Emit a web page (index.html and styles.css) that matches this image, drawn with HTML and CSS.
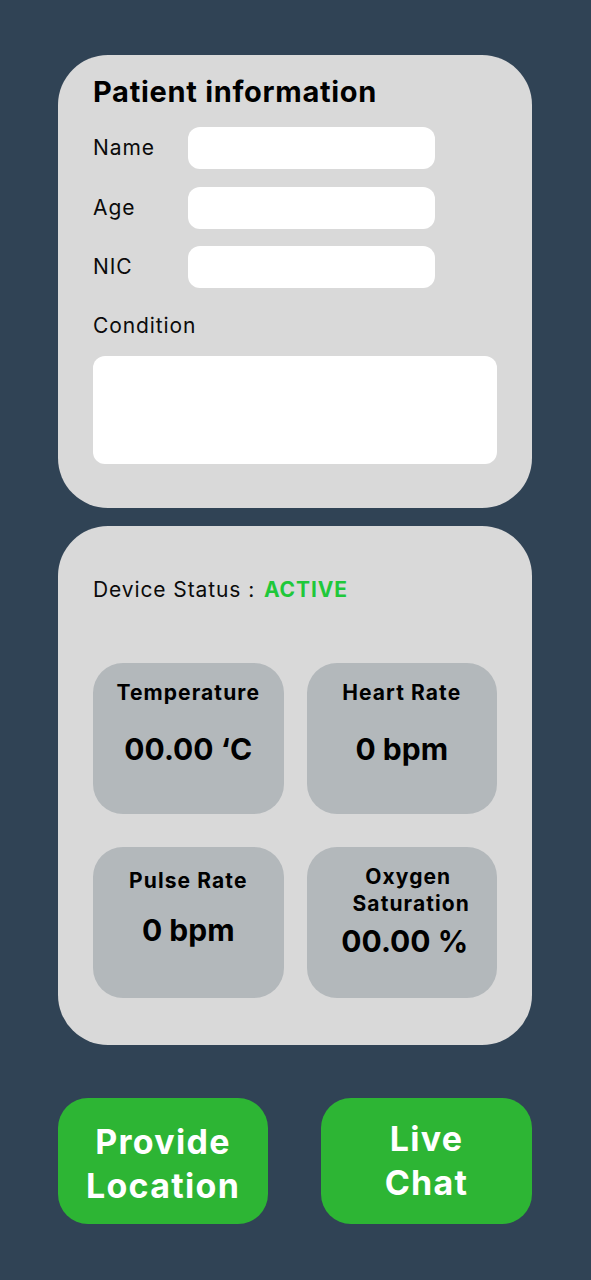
FILE: index.html
```html
<!DOCTYPE html>
<html lang="en">
<head>
<meta charset="utf-8">
<title>Patient Monitor</title>
<link rel="stylesheet" href="styles.css">
</head>
<body>
<main class="screen">
  <section class="card card-patient">
    <h1 class="card-title">Patient information</h1>
    <div class="field-row">
      <label class="field-label">Name</label>
      <div class="input"></div>
    </div>
    <div class="field-row">
      <label class="field-label">Age</label>
      <div class="input"></div>
    </div>
    <div class="field-row">
      <label class="field-label">NIC</label>
      <div class="input"></div>
    </div>
    <div class="condition-label">Condition</div>
    <div class="textarea"></div>
  </section>

  <section class="card card-device">
    <div class="status">Device Status : <span class="status-value">ACTIVE</span></div>
    <div class="tiles">
      <div class="tile tile-temp">
        <div class="tile-title">Temperature</div>
        <div class="tile-value">00.00 ‘C</div>
      </div>
      <div class="tile tile-heart">
        <div class="tile-title">Heart Rate</div>
        <div class="tile-value">0 bpm</div>
      </div>
      <div class="tile tile-pulse">
        <div class="tile-title">Pulse Rate</div>
        <div class="tile-value">0 bpm</div>
      </div>
      <div class="tile tile-oxygen">
        <div class="tile-title"><span class="line-oxygen">Oxygen</span><br><span class="line-saturation">Saturation</span></div>
        <div class="tile-value">00.00 %</div>
      </div>
    </div>
  </section>

  <div class="actions">
    <button class="action">Provide<br>Location</button>
    <button class="action action-chat">Live<br>Chat</button>
  </div>
</main>
</body>
</html>
```

FILE: styles.css
```css
* { box-sizing: border-box; }

html, body {
  margin: 0;
  padding: 0;
  background: #304355;
}

body {
  font-family: Inter, "Noto Sans", "Liberation Sans", sans-serif;
  color: #0b0b0b;
  min-height: 1280px;
}

.screen {
  width: 474px;
  margin-left: 58px;
  padding-top: 55px;
  display: flex;
  flex-direction: column;
}

.card {
  background: #d9d9d9;
  border-radius: 50px;
  padding: 0 35px;
}

.card-patient {
  padding-top: 20px;
  padding-bottom: 44px;
  display: flex;
  flex-direction: column;
}

.card-title {
  margin: 0 0 18px;
  font-size: 29px;
  line-height: 34px;
  letter-spacing: 0.7px;
  font-weight: 700;
  color: #000;
}

.field-row {
  display: flex;
  align-items: center;
  height: 42px;
  margin-bottom: 17.5px;
}

.field-label,
.condition-label,
.status {
  font-size: 21px;
  line-height: 24px;
  letter-spacing: 0.9px;
}

.field-label {
  width: 95px;
  flex: none;
}

.input {
  width: 247px;
  height: 42px;
  background: #fff;
  border-radius: 12px;
}

.condition-label {
  margin-top: 8px;
}

.textarea {
  margin-top: 18px;
  height: 108px;
  background: #fff;
  border-radius: 12px;
}

.card-device {
  margin-top: 18px;
  padding-top: 52px;
  padding-bottom: 47px;
}

.status-value {
  margin-left: 2px;
  font-weight: 700;
  letter-spacing: 0.9px;
  color: #1fc83a;
}

.tiles {
  margin-top: 61px;
  display: grid;
  grid-template-columns: 1fr 1fr;
  grid-auto-rows: 151px;
  column-gap: 23px;
  row-gap: 33px;
}

.tile {
  background: #b3b8bb;
  border-radius: 30px;
  display: flex;
  flex-direction: column;
  align-items: center;
  text-align: center;
  color: #000;
}

.tile-title {
  font-size: 21px;
  line-height: 24px;
  letter-spacing: 1.1px;
  font-weight: 700;
}

.tile-value {
  font-size: 30px;
  line-height: 34px;
  font-weight: 700;
}

.tile-temp, .tile-heart { padding-top: 18px; }
.tile-temp .tile-value, .tile-heart .tile-value { margin-top: 27px; }

.tile-pulse { padding-top: 22px; }
.tile-pulse .tile-value { margin-top: 20px; }

.tile-oxygen { padding-top: 16px; }
.tile-oxygen .tile-title { line-height: 27px; }
.tile-oxygen .line-oxygen { padding-left: 13px; }
.tile-oxygen .line-saturation { padding-left: 19px; }
.tile-oxygen .tile-value { margin-top: 7px; padding-left: 6px; }

.actions {
  margin-top: 53px;
  display: flex;
  justify-content: space-between;
}

.action {
  width: 210px;
  height: 126px;
  border: 0;
  border-radius: 30px;
  background: #2db534;
  color: #fff;
  font-family: inherit;
  font-size: 34px;
  line-height: 44px;
  letter-spacing: 1.3px;
  font-weight: 700;
  padding: 6px 0 0;
}

.action-chat {
  width: 211px;
  padding: 0;
}
```
